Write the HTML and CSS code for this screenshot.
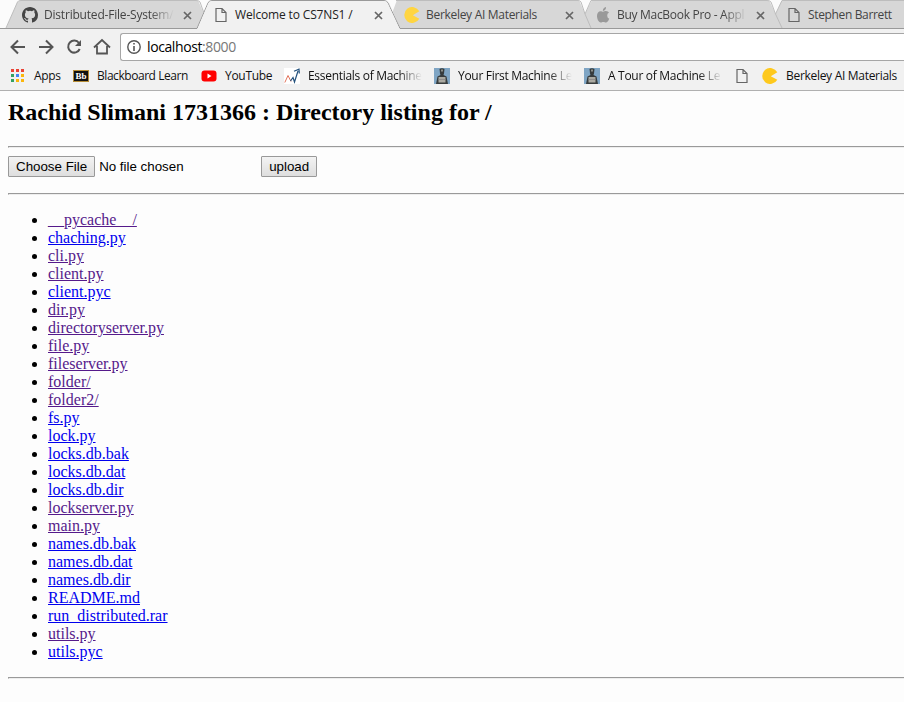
FILE: index.html
```html
<!DOCTYPE html>
<html lang="en">
<head>
<meta charset="utf-8">
<title>Welcome to CS7NS1 /</title>
<link rel="stylesheet" href="styles.css">
</head>
<body>
<svg class="defs" width="0" height="0">
  <symbol id="page" viewBox="0 0 16 16"><path d="M3.5 1.5h6l4 4v9h-10zM9.5 1.5v4h4" transform="translate(-.5 0)" fill="none" stroke="currentColor" stroke-width="1.2"/></symbol>
  <symbol id="close" viewBox="0 0 9 9"><path d="M1 1l7 7M8 1L1 8" stroke="currentColor" stroke-width="1.7"/></symbol>
  <symbol id="pac" viewBox="0 0 16 16"><path d="M15.3 4.2A8 8 0 1 0 15.3 11.8L8.8 8.3z" fill="currentColor"/></symbol>
  <symbol id="robot" viewBox="0 0 16 16"><path fill="#7fa5c4" d="M0 0h16v16H0z"/><path fill="#373c3d" d="M5.500 1Q8-.6 10.500 1L10 5.500 9.500 7 12.500 8.500 14 16H2L3.500 8.500 6.500 7 6 5.500z"/><path fill="#aaa9a1" d="M4.500 9h7v5.500h-7z"/><path d="M7 1.500h2v2H7z" fill="#8b8f8c"/><path d="M4.500 11.500h7" stroke="#888" stroke-width=".8"/></symbol>
</svg>
<header class="browser">
  <div class="tabs">
    <svg class="tab-shapes" viewBox="0 0 904 29" width="904" height="29">
      <path d="M782 28.500L771 3Q770 .5 773 .5H904V28.500z" fill="#d7d7d7"/>
      <path d="M591 28.500L581 3Q580 .5 585 .5H768Q771 .5 772 2L783 28.500z" fill="#d7d7d7"/>
      <path d="M400 28.500L389 3Q388 .5 392 .5H578Q581 .5 582 2L592 28.500z" fill="#d7d7d7"/>
      <path d="M6 28.500L17 3Q18 .5 21 .5H196Q200 .5 201 2L204 12 197 28.500z" fill="#d7d7d7"/>
      <path d="M388 0H397L392.500 12zM579 0H592L585 14zM769 0H782L775.500 14zM198 0H207L203 12z" fill="#fbfbfb"/>
      <path d="M6 28L17.500 2Q18 .5 21 .5H196Q199 .5 200 2L203.500 12M396 .5H578Q580 .5 581 2L585 14L591 28M585 14L591 .5H767Q770 .5 771 2L775.500 14L782 28M775.500 14L782 .5H904" fill="none" stroke="#bdbdbd"/>
      <path d="M0 28.500H197L208 3Q209 .5 212 .5H384Q387 .5 388 3L400 28.500H904" fill="none" stroke="#999"/>
      <path d="M197.500 29L208.500 3Q209.500 1 212 1H384Q386.500 1 387.500 3L399.500 29z" fill="#f1f1f1"/>
    </svg>
    <div class="tab t1"><svg class="icon" viewBox="0 0 16 16"><path fill="#444" d="M8 0C3.580 0 0 3.580 0 8c0 3.540 2.290 6.530 5.470 7.590.4.070.55-.17.55-.38 0-.19-.01-.82-.01-1.490-2.010.37-2.530-.49-2.690-.94-.09-.23-.48-.94-.82-1.130-.28-.15-.68-.52-.01-.53.63-.01 1.080.58 1.230.82.720 1.210 1.870.87 2.330.66.070-.52.280-.87.510-1.070-1.780-.2-3.640-.89-3.640-3.950 0-.87.310-1.590.82-2.150-.08-.2-.36-1.020.08-2.120 0 0 .67-.21 2.200.82a7.600 7.600 0 0 1 4 0c1.530-1.040 2.200-.82 2.200-.82.440 1.100.160 1.920.08 2.120.510.560.820 1.270.820 2.150 0 3.070-1.870 3.750-3.650 3.950.290.250.540.730.540 1.480 0 1.070-.01 1.930-.01 2.200 0 .21.150.460.550.380A8 8 0 0 0 16 8c0-4.420-3.580-8-8-8z"/></svg><span class="label fade">Distributed-File-System/</span><svg class="close"><use href="#close"/></svg></div>
    <div class="tab t2"><svg class="icon"><use href="#page"/></svg><span class="label">Welcome to CS7NS1 /</span><svg class="close"><use href="#close"/></svg></div>
    <div class="tab t3"><svg class="icon yellow"><use href="#pac"/></svg><span class="label">Berkeley AI Materials</span><svg class="close"><use href="#close"/></svg></div>
    <div class="tab t4"><svg class="icon" viewBox="0 0 16 16"><path fill="#999" d="M11 0q.2 2-1 3T7.800 4Q7.700 2 9 1T11 0zM8 4.700C9 4.700 9.700 4 11 4q2 0 3 1.500-2 1-1.800 3.200Q12.300 11 14.200 11.700 12.700 15.500 11 15.500C10 15.500 9.500 15 8.300 15S6.700 15.500 5.700 15.500C3.500 15.500 2 11.500 2 9 2 6 3.600 4.200 5.600 4.200 6.700 4.200 7.400 4.700 8 4.700z"/></svg><span class="label fade">Buy MacBook Pro - Appl</span><svg class="close"><use href="#close"/></svg></div>
    <div class="tab t5"><svg class="icon"><use href="#page"/></svg><span class="label">Stephen Barrett</span></div>
  </div>
  <div class="toolbar">
    <svg class="nav" viewBox="0 0 112 30" width="112" height="30" fill="none" stroke="#555" stroke-width="2"><path d="M25 18H12.500M18 11.500L11.500 18 18 24.500M39 18H52M46 11.500L52.500 18 46 24.500M79 14A6 6 0 1 0 79.700 20"/><path d="M81 11v6h-6z" fill="#555" stroke="none"/><path d="M94 18.500L102 11 110 18.500M97 17v7.500H107V17" stroke-width="1.800"/></svg>
    <div class="address"><svg class="info" viewBox="0 0 14 14"><circle cx="7" cy="7" r="6.200" fill="none" stroke="#555" stroke-width="1.400"/><path d="M6.200 3h1.600v1.600H6.200zM6.200 6h1.600v5H6.200z" fill="#555"/></svg><span class="host">localhost<span class="port">:8000</span></span></div>
  </div>
  <nav class="bookmarks">
    <a class="bm b1"><svg class="apps" viewBox="0 0 13 13"><path fill="#ea4335" d="M0 0h3v3H0zM5 0h3v3H5zM10 0h3v3h-3z"/><path fill="#34a162" d="M0 5h3v3H0zM0 10h3v3H0z"/><path fill="#4285f4" d="M5 5h3v3H5z"/><path fill="#fbb60b" d="M10 5h3v3h-3zM5 10h3v3H5zM10 10h3v3h-3z"/></svg><span class="label">Apps</span></a>
    <a class="bm b2"><span class="bb">Bb</span><span class="label">Blackboard Learn</span></a>
    <a class="bm b3"><svg class="icon" viewBox="0 0 16 16"><rect x=".5" y="2.500" width="15" height="11" rx="3" fill="#f00"/><path d="M6.500 5.500l4 2.500-4 2.500z" fill="#fff"/></svg><span class="label">YouTube</span></a>
    <a class="bm b4"><svg class="icon" viewBox="0 0 16 16"><path fill="#fff" d="M0 0h16v16H0z"/><path d="M.8 14.500L4 7.500 7 13.500" fill="none" stroke="#e2745c"/><path d="M6.500 13L9 9.500 10.500 14 14 3M10 3.200L15 1.200 15.300 5.500" fill="none" stroke="#24527d" stroke-width="1.200"/></svg><span class="label fade">Essentials of Machine</span></a>
    <a class="bm b5"><svg class="icon"><use href="#robot"/></svg><span class="label fade">Your First Machine Le</span></a>
    <a class="bm b6"><svg class="icon"><use href="#robot"/></svg><span class="label fade">A Tour of Machine Le</span></a>
    <a class="bm b7"><svg class="icon"><use href="#page"/></svg></a>
    <a class="bm b8"><svg class="icon gold"><use href="#pac"/></svg><span class="label">Berkeley AI Materials</span></a>
  </nav>
</header>
<main>
  <h2>Rachid Slimani 1731366 : Directory listing for /</h2>
  <hr>
  <form class="upload"><button type="button">Choose File</button><span class="chosen">No file chosen</span><button type="button" class="send">upload</button></form>
  <hr>
  <ul>
    <li><a class="visited" href="#">__pycache__/</a></li>
    <li><a href="#">chaching.py</a></li>
    <li><a class="visited" href="#">cli.py</a></li>
    <li><a class="visited" href="#">client.py</a></li>
    <li><a href="#">client.pyc</a></li>
    <li><a class="visited" href="#">dir.py</a></li>
    <li><a class="visited" href="#">directoryserver.py</a></li>
    <li><a class="visited" href="#">file.py</a></li>
    <li><a class="visited" href="#">fileserver.py</a></li>
    <li><a class="visited" href="#">folder/</a></li>
    <li><a class="visited" href="#">folder2/</a></li>
    <li><a href="#">fs.py</a></li>
    <li><a href="#">lock.py</a></li>
    <li><a href="#">locks.db.bak</a></li>
    <li><a href="#">locks.db.dat</a></li>
    <li><a href="#">locks.db.dir</a></li>
    <li><a class="visited" href="#">lockserver.py</a></li>
    <li><a class="visited" href="#">main.py</a></li>
    <li><a href="#">names.db.bak</a></li>
    <li><a href="#">names.db.dat</a></li>
    <li><a href="#">names.db.dir</a></li>
    <li><a href="#">README.md</a></li>
    <li><a href="#">run_distributed.rar</a></li>
    <li><a class="visited" href="#">utils.py</a></li>
    <li><a href="#">utils.pyc</a></li>
  </ul>
  <hr>
</main>
</body>
</html>
```
FILE: styles.css
```css
* { box-sizing: border-box; }
body { margin: 0; width: 904px; height: 702px; overflow: hidden; background: #fdfdfd; color: #000; font: 16px/18px "Liberation Serif", serif; }
.defs { position: absolute; }
.browser { background: #f1f1f1; font: 12px/16px "Open Sans", sans-serif; }
.tabs { position: relative; display: flex; height: 29px; background: #fbfbfb; overflow: hidden; }
.tab-shapes { position: absolute; left: 0; top: 0; }
.tab { position: relative; display: flex; align-items: center; flex: none; width: 191px; height: 29px; padding-top: 1px; color: #444; }
.t1 { width: 213px; padding-left: 22px; }
.t5 { width: 150px; }
.t2 { color: #222; }
.icon { width: 16px; height: 16px; flex: none; color: #666; }
.yellow { color: #ffd541; }
.gold { color: #fec91d; }
.tab .label { width: 130px; margin-left: 6px; }
.tab .close { width: 9px; height: 9px; margin-left: 8.5px; color: #666; }
.label { white-space: nowrap; letter-spacing: -.3px; }
.t1 .label { letter-spacing: -.2px; }
.t2 .label { letter-spacing: -.15px; }
.t5 .label { letter-spacing: -.35px; }
.fade { -webkit-mask-image: linear-gradient(to right, #000 calc(100% - 24px), transparent); mask-image: linear-gradient(to right, #000 calc(100% - 24px), transparent); }
.toolbar { display: flex; height: 32px; }
.nav { margin-right: 8px; flex: none; }
.address { display: flex; align-items: center; flex: 1; height: 28px; margin-top: 4px; padding-left: 6px; border: 1px solid #a6a6a6; border-right: 0; border-radius: 3px 0 0 3px; background: #fff; }
.info { width: 14px; height: 14px; margin-right: 6px; }
.host { font-size: 14px; letter-spacing: -.4px; }
.port { color: #777; }
.bookmarks { display: flex; height: 30px; border-bottom: 1px solid #b0b0b0; }
.bm { display: flex; align-items: center; flex: none; color: #111; }
.bm .label { margin-left: 8px; }
.apps { width: 13px; height: 13px; }
.b1 { width: 73px; padding-left: 11px; }
.b1 .label { margin-left: 10px; }
.b2 { width: 128px; }
.b2 .label { letter-spacing: -.45px; }
.b3 { width: 83px; }
.b4, .b5, .b6 { width: 150px; }
.b4 .label, .b5 .label, .b6 .label { width: 114px; }
.b7 { width: 28px; }
.bb { width: 16px; height: 12px; border: 1px solid #b58c35; background: #111; color: #fff; font: bold 9px/10px "Liberation Serif", serif; text-align: center; }
main { padding: 7px 0 0 8px; }
h2 { margin: 0 0 20px; font-size: 24px; line-height: 28px; }
hr { height: 2px; margin: 0; border: 1px solid; border-color: #9a9a9a #eee #eee #9a9a9a; border-right: 0; }
.upload { display: flex; align-items: center; height: 21px; margin: 8px 0 16px; font: 13.333px/16px "Liberation Sans", sans-serif; }
.upload button { height: 21px; padding: 0 7px; border: 1px solid #999; border-radius: 1px; background: linear-gradient(#f3f3f3, #dedede); color: #000; font: inherit; }
.chosen { width: 162px; margin-left: 4px; }
ul { margin: 16px 0; padding-left: 40px; }
a { color: #00e; text-underline-offset: 1px; }
.visited { color: #551a8b; }
```
